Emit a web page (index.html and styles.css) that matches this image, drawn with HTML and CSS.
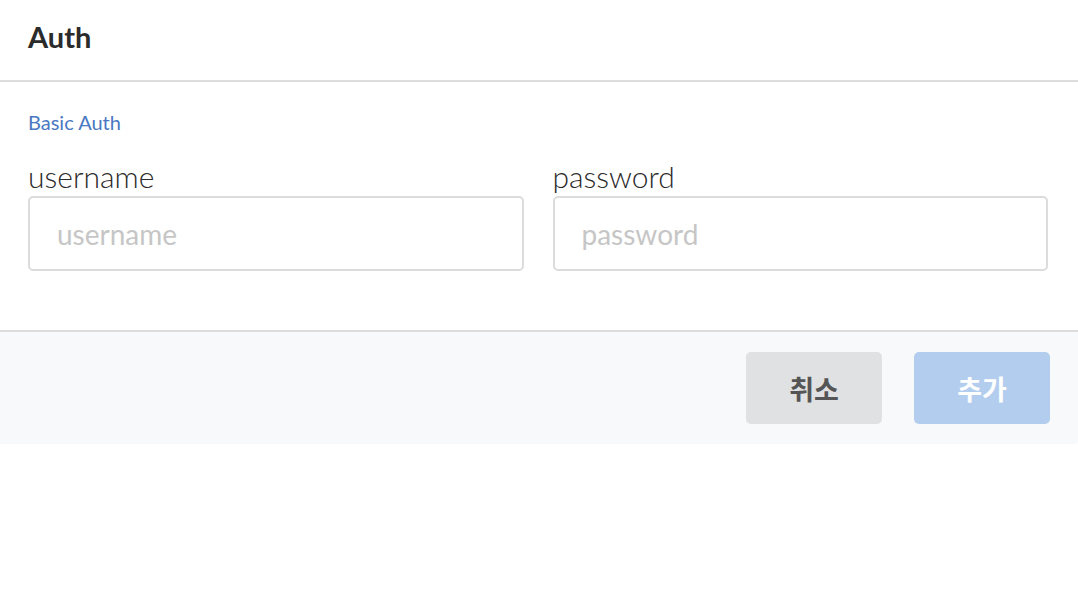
FILE: index.html
```html
<!DOCTYPE html>
<html lang="ko">
<head>
<meta charset="utf-8">
<title>Auth</title>
<link rel="stylesheet" href="styles.css">
</head>
<body>
<div class="modal">
  <header class="modal-header">
    <h1 class="modal-title">Auth</h1>
  </header>
  <section class="modal-body">
    <div class="section-title">Basic Auth</div>
    <div class="fields">
      <label class="field">
        <span class="field-label">username</span>
        <input class="field-input" type="text" placeholder="username">
      </label>
      <label class="field">
        <span class="field-label">password</span>
        <input class="field-input" type="text" placeholder="password">
      </label>
    </div>
  </section>
  <footer class="modal-footer">
    <button class="btn btn-cancel" type="button">취소</button>
    <button class="btn btn-add" type="button">추가</button>
  </footer>
</div>
</body>
</html>
```
FILE: styles.css
```css
html, body {
  margin: 0;
  padding: 0;
  background: #ffffff;
}
body {
  font-family: Lato, "Noto Sans CJK KR", sans-serif;
  color: #333333;
}
.modal {
  width: 1078px;
}
.modal-header {
  height: 82px;
  box-sizing: border-box;
  border-bottom: 2px solid #dddddd;
  padding: 19px 28px 0;
}
.modal-title {
  margin: 0;
  font-size: 29px;
  font-weight: 700;
  color: #2b2b2b;
  line-height: 35px;
}
.modal-body {
  padding: 28px 30px 59px 28px;
  border-bottom: 2px solid #dddddd;
}
.section-title {
  font-size: 20px;
  color: #4a78c2;
  line-height: 24px;
}
.fields {
  margin-top: 24px;
  display: grid;
  grid-template-columns: 1fr 1fr;
  column-gap: 29px;
}
.field {
  display: flex;
  flex-direction: column;
}
.field-label {
  font-size: 30px;
  font-weight: 300;
  color: #2b2b2b;
  line-height: 36px;
  margin-bottom: 2px;
}
.field-input {
  height: 75px;
  box-sizing: border-box;
  border: 2px solid #dcdcdc;
  border-radius: 5px;
  padding: 0 27px;
  font-family: Lato, sans-serif;
  font-size: 28px;
  color: #333333;
  outline: none;
  width: 100%;
}
.field-input::placeholder {
  color: #c6c6c6;
}
.modal-footer {
  background: #f8f9fb;
  height: 112px;
  box-sizing: border-box;
  padding: 20px 28px 0 28px;
  display: flex;
  justify-content: flex-end;
  align-items: flex-start;
  gap: 32px;
  border-bottom-right-radius: 4px;
}
.btn {
  width: 136px;
  height: 72px;
  border: none;
  border-radius: 5px;
  font-family: "Noto Sans CJK KR", sans-serif;
  font-size: 27px;
  font-weight: 700;
  cursor: pointer;
}
.btn-cancel {
  background: #e0e1e3;
  color: #555555;
}
.btn-add {
  background: #b3cdee;
  color: #ffffff;
}
```
